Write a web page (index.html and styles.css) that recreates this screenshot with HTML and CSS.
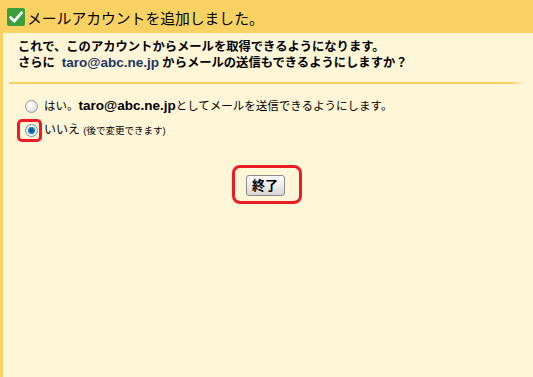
FILE: index.html
```html
<!DOCTYPE html>
<html lang="ja">
<head>
<meta charset="utf-8">
<link rel="stylesheet" href="styles.css">
</head>
<body>
<div class="header">
  <svg class="check" width="18" height="18" viewBox="0 0 18 18">
    <rect x="0" y="0" width="18" height="18" rx="2" fill="#3a9f3c"/>
    <path d="M3.5 9.5 L7.3 13.2 L14.5 4.8" fill="none" stroke="#fff" stroke-width="2.8" stroke-linecap="round" stroke-linejoin="round"/>
  </svg>
  <span class="title">メールアカウントを追加しました。</span>
</div>
<div class="main">
  <div class="intro">
    <p class="line">これで、このアカウントからメールを取得できるようになります。</p>
    <p class="line">さらに&nbsp; <span class="mail">taro@abc.ne.jp</span> からメールの送信もできるようにしますか？</p>
  </div>
  <div class="divider"></div>
  <div class="options">
    <div class="opt">
      <span class="radio"></span>
      <span class="label">はい。<span class="mail black">taro@abc.ne.jp</span>としてメールを送信できるようにします。</span>
    </div>
    <div class="opt">
      <span class="radio on marked"></span>
      <span class="label">いいえ <span class="small">(後で変更できます)</span></span>
    </div>
  </div>
  <div class="actions">
    <div class="btn-mark"><button class="btn">終了</button></div>
  </div>
</div>
</body>
</html>
```
FILE: styles.css
```css
html, body {
  margin: 0;
  padding: 0;
  height: 100%;
}
body {
  background: #fff6d8;
  font-family: "Liberation Sans", "Noto Sans CJK JP", sans-serif;
  color: #000;
  display: flex;
  flex-direction: column;
}
.header {
  height: 33px;
  background: #fad263;
  display: flex;
  align-items: center;
  padding-left: 7px;
  gap: 2px;
  flex: none;
}
.check { display: block; margin-top: 1px; }
.title {
  font-family: "Noto Sans CJK JP", sans-serif;
  font-size: 14.8px;
  line-height: 18px;
  margin-top: 2px;
}
.main {
  flex: 1;
  border-left: 3px solid #fad263;
  box-shadow: inset 1px 0 0 #fffbea;
  padding-right: 7px;
}
.intro {
  padding: 7px 0 0 15px;
}
.line {
  margin: 0;
  font-size: 12.3px;
  line-height: 15px;
  font-weight: bold;
  white-space: nowrap;
}
.mail {
  font-family: "Liberation Sans", sans-serif;
  font-size: 13.5px;
  font-weight: bold;
  color: #1b3565;
}
.mail.black { color: #000; }
.divider {
  height: 2px;
  margin: 11px 0 0 6px;
  background: linear-gradient(to right, #f9d062 0, #f9d062 97%, rgba(249,208,98,0) 100%);
}
.options {
  padding: 13px 0 0 22px;
  display: flex;
  flex-direction: column;
  gap: 6px;
}
.opt {
  display: flex;
  align-items: center;
  height: 18px;
}
.radio {
  flex: none;
  width: 13px;
  height: 13px;
  border-radius: 50%;
  box-sizing: border-box;
  border: 1px solid #9a9a9a;
  background: radial-gradient(circle at 40% 35%, #ffffff 0, #f0f0f0 40%, #cfcfcf 100%);
  margin-right: 6px;
  position: relative;
}
.radio.on {
  background: radial-gradient(circle at 50% 50%, #0d3f6a 0, #1a76b8 2.5px, #2a8fd0 3.3px, #e6eef4 4px, #f4f4f4 5px, #cfcfcf 100%);
  border-color: #7a8a98;
}
.radio.marked::after {
  content: "";
  position: absolute;
  left: -9px;
  top: -6px;
  width: 25px;
  height: 23px;
  border: 3px solid #ec1c24;
  border-radius: 5px;
  box-sizing: border-box;
}
.label {
  font-size: 12px;
  line-height: 15px;
  white-space: nowrap;
}
.opt:first-child .label { font-size: 11.5px; }
.small {
  font-size: 9.5px;
}
.actions {
  display: flex;
  justify-content: center;
  padding-top: 26px;
}
.btn-mark {
  width: 70px;
  height: 39px;
  box-sizing: border-box;
  border: 3px solid #ec1c24;
  border-radius: 8px;
  display: flex;
  align-items: center;
  justify-content: center;
  margin-left: 5px;
}
.btn {
  width: 39px;
  height: 21px;
  padding: 0;
  border: 1px solid #8a8a8a;
  border-radius: 3px;
  background: linear-gradient(to bottom, #fbfbfb 0, #eeeeee 45%, #d6d6d6 100%);
  font-family: "Noto Sans CJK JP", sans-serif;
  font-size: 13px;
  font-weight: bold;
  line-height: 18px;
  color: #000;
  margin-top: 1px;
  margin-right: 4px;
}
```
